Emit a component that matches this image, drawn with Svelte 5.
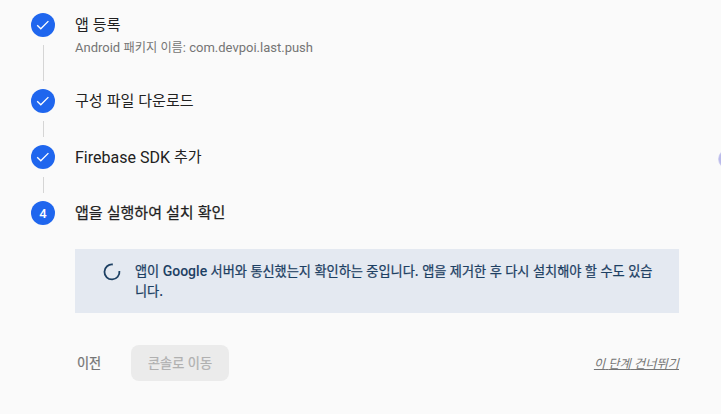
<script>
  const steps = [
    { title: '앱 등록', note: 'Android 패키지 이름: com.devpoi.last.push', done: true },
    { title: '구성 파일 다운로드', done: true },
    { title: 'Firebase SDK 추가', done: true },
    { title: '앱을 실행하여 설치 확인', done: false }
  ];
  const notice = ['앱이 Google 서버와 통신했는지 확인하는 중입니다. 앱을 제거한 후 다시 설치해야 할 수도 있습', '니다.'];
  const runs = (text) => text.split(/([가-힣]+)/).filter(Boolean).map((t) => ({ t, ko: /[가-힣]/.test(t) }));
</script>

{#snippet mixed(text)}{#each runs(text) as run}{#if run.ko}<span class="ko">{run.t}</span>{:else}{run.t}{/if}{/each}{/snippet}

<main>
  <ol>
    {#each steps as step, i}
      <li class:noted={step.note} class:active={!step.done}>
        <div class="rail">
          <span class="badge">
            {#if step.done}
              <svg width="16" height="16" viewBox="0 0 16 16"><path fill="none" stroke="#fff" stroke-width="1.35" d="M2.2 8.3 5.8 11.8 13.4 4.1" /></svg>
            {:else}{i + 1}{/if}
          </span>
          {#if step.done}<span class="line"></span>{/if}
        </div>
        <div class="label">
          <div class="title">{@render mixed(step.title)}</div>
          {#if step.note}<div class="note">{@render mixed(step.note)}</div>{/if}
        </div>
      </li>
    {/each}
  </ol>
  <section>
    <div class="notice">
      <svg class="spinner" width="18" height="18" viewBox="0 0 18 18"><path fill="none" stroke="#1d4063" stroke-width="1.8" d="M9.8 1.5A7.5 7.5 0 1 0 16.4 8" /></svg>
      <p>{@render mixed(notice[0])}<br />{@render mixed(notice[1])}</p>
    </div>
    <div class="actions">
      <button class="prev">{@render mixed('이전')}</button>
      <button class="go" disabled>{@render mixed('콘솔로 이동')}</button>
      <a href="#skip">{@render mixed('이 단계 건너뛰기')}</a>
    </div>
  </section>
  <span class="edge"></span>
</main>

<style>
  :global(body) { margin: 0; background: #fafafa; overflow: hidden; }
  main { position: relative; box-sizing: border-box; width: 721px; height: 414px; padding: 13px 42px 0 31px; overflow: hidden; background: #fafafa; font-family: Roboto, "Noto Sans CJK KR", sans-serif; color: #212121; }
  .ko { font-size: 0.94em; line-height: 1; }
  .title .ko { vertical-align: 1px; }
  .active .ko, .notice .ko, button .ko { font-weight: 400; -webkit-text-stroke: 0.25px currentColor; }
  ol { list-style: none; margin: 0; padding: 0; }
  li { display: flex; height: 56px; gap: 20px; }
  li.noted { height: 76px; }
  li.active { height: 24px; }
  .label { padding-top: 1px; }
  .rail { width: 24px; display: flex; flex-direction: column; align-items: center; }
  .badge { width: 24px; height: 24px; flex: none; border-radius: 50%; background: #1f66ee; color: #fff; display: flex; align-items: center; justify-content: center; font-size: 13px; font-weight: 500; }
  .line { width: 1px; flex: 1; margin: 8px 0; background: #d5d5d5; }
  .title { height: 24px; font-size: 16px; line-height: 24px; white-space: nowrap; }
  .active .title { font-weight: 500; }
  .note { font-size: 13px; line-height: 20px; color: #757575; white-space: nowrap; }
  section { margin: 24px 0 0 44px; }
  .notice { display: flex; box-sizing: border-box; height: 64px; padding: 12px 0 0 28px; gap: 14px; background: #e4e9f1; color: #1d4063; }
  .spinner { flex: none; margin-top: 2px; }
  p { margin: 0; font-size: 14px; line-height: 20px; font-weight: 500; white-space: nowrap; }
  .actions { display: flex; align-items: center; height: 36px; margin-top: 32px; }
  button { font: 500 14px/20px Roboto, "Noto Sans CJK KR", sans-serif; border: 0; padding: 0; }
  .prev { width: 28px; background: none; color: #757575; white-space: nowrap; }
  .go { width: 98px; height: 36px; margin-left: 28px; border-radius: 8px; background: #ebebeb; color: #b0b0b0; }
  a { margin-left: auto; font-size: 13px; font-style: italic; color: #757575; }
  .edge { position: absolute; left: 718px; top: 149px; width: 20px; height: 20px; border-radius: 50%; background: radial-gradient(circle, #b9b9ea 60%, #dedef4 72%); }
</style>
